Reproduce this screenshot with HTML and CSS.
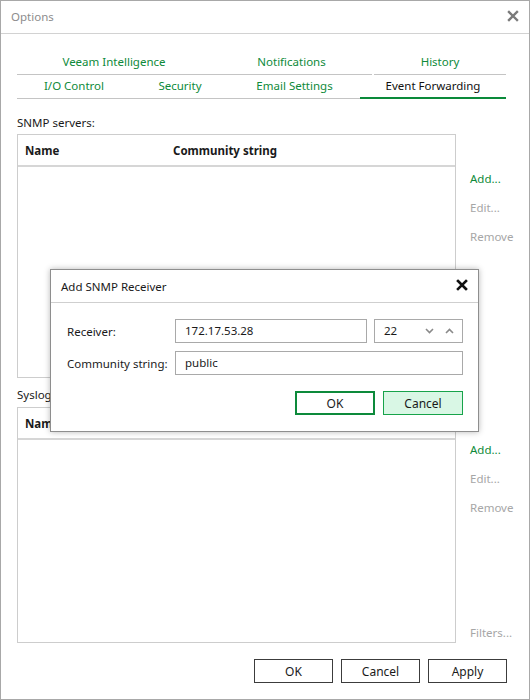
FILE: index.html
```html
<!DOCTYPE html>
<html lang="en">
<head>
  <meta charset="UTF-8" />
  <title>Options</title>
  <link rel="stylesheet" href="styles.css">
</head>
<body>

<div class="window">
  <div class="titlebar">
    <span class="title">Options</span>
    <svg class="close" width="12" height="12" viewBox="0 0 12 12">
      <path d="M2 2 L10 10 M10 2 L2 10" stroke="#7a7a7a" stroke-width="2.4" stroke-linecap="square"/>
    </svg>
  </div>

  <div class="body">
    <!-- two rows of tabs -->
    <div class="tabs">
      <div class="tab-row">
        <div class="tab w194">Veeam Intelligence</div>
        <div class="tab w161">Notifications</div>
        <div class="tab w132 gap">History</div>
      </div>
      <div class="tab-row">
        <div class="tab w114">I/O Control</div>
        <div class="tab w98">Security</div>
        <div class="tab w131">Email Settings</div>
        <div class="tab w146 active">Event Forwarding</div>
      </div>
    </div>

    <div class="section first">
      <div class="label">SNMP servers:</div>
      <div class="list-row">
        <div class="grid snmp">
          <div class="grid-head">
            <span>Name</span>
            <span>Community string</span>
          </div>
        </div>
        <div class="side">
          <a class="link">Add...</a>
          <a class="link disabled">Edit...</a>
          <a class="link disabled">Remove</a>
        </div>
      </div>
    </div>

    <div class="section">
      <div class="label">Syslog servers:</div>
      <div class="list-row">
        <div class="grid syslog">
          <div class="grid-head">
            <span>Name</span>
            <span>Port</span>
          </div>
        </div>
        <div class="side">
          <a class="link">Add...</a>
          <a class="link disabled">Edit...</a>
          <a class="link disabled">Remove</a>
          <a class="link disabled filters">Filters...</a>
        </div>
      </div>
    </div>

    <div class="footer">
      <button class="btn">OK</button>
      <button class="btn">Cancel</button>
      <button class="btn">Apply</button>
    </div>
  </div>

  <!-- modal on top of the options window -->
  <div class="dialog">
    <div class="dialog-title">
      <span>Add SNMP Receiver</span>
      <svg class="dialog-close" width="12" height="12" viewBox="0 0 12 12">
        <path d="M2 2 L10 10 M10 2 L2 10" stroke="#111" stroke-width="2.6" stroke-linecap="square"/>
      </svg>
    </div>
    <div class="dialog-body">
      <div class="form-row">
        <label>Receiver:</label>
        <div class="input host">172.17.53.28</div>
        <div class="input spin">
          <span>22</span>
          <svg class="chev" width="9" height="6" viewBox="0 0 9 6"><path d="M1 1 L4.5 4.5 L8 1" fill="none" stroke="#8a8a8a" stroke-width="1.6"/></svg>
          <svg class="chev" width="9" height="6" viewBox="0 0 9 6"><path d="M1 5 L4.5 1.5 L8 5" fill="none" stroke="#8a8a8a" stroke-width="1.6"/></svg>
        </div>
      </div>
      <div class="form-row">
        <label>Community string:</label>
        <div class="input wide">public</div>
      </div>
      <div class="dialog-buttons">
        <button class="btn primary">OK</button>
        <button class="btn soft">Cancel</button>
      </div>
    </div>
  </div>
</div>

</body>
</html>
```

FILE: styles.css
```css
body {
  margin: 0;
  font-family: 'Noto Sans', 'Segoe UI', sans-serif;
  font-size: 11.5px;
  color: #1a1a1a;
  background: #fff;
}

.window {
  position: relative;
  width: 530px;
  height: 700px;
  box-sizing: border-box;
  border: 1px solid #a8a8a8;
  background: #fff;
}

.titlebar {
  box-sizing: border-box;
  height: 33px;
  border-bottom: 1px solid #d2d2d2;
  display: flex;
  align-items: center;
  justify-content: space-between;
  padding: 0 10px 1px 10px;
}

.title {
  color: #8c8c8c;
}

.close {
  margin-top: -1px;
}

.body {
  padding: 0 22px 0 16px;
}

/* tabs */
.tabs {
  padding-top: 17px;
}

.tab-row {
  display: flex;
}

.tab {
  flex-shrink: 0;
  height: 23px;
  line-height: 22px;
  text-align: center;
  color: #0e8a3a;
  border-bottom: 1px solid #c4c4c4;
}

.tab.gap { margin-left: 2px; }
.w194 { width: 194px; }
.w161 { width: 161px; }
.w132 { width: 132px; }
.w114 { width: 114px; }
.w98  { width: 98px; }
.w131 { width: 131px; }
.w146 { width: 146px; }

.tab.active {
  color: #111;
  height: 22px;
  border-bottom: 2px solid #0a8a3a;
}

/* lists */
.section.first {
  padding-top: 14px;
}

.label {
  line-height: 19px;
  margin-bottom: 2px;
}

.section + .section .label {
  margin-top: 7px;
  margin-bottom: 3px;
}

.list-row {
  display: flex;
  gap: 14px;
}

.grid {
  flex-shrink: 0;
  width: 439px;
  box-sizing: border-box;
  border: 1px solid #cdcdcd;
}

.grid.snmp { height: 244px; }
.grid.syslog { height: 236px; }

.grid-head {
  height: 30px;
  border-bottom: 2px solid #d6d6d6;
  display: grid;
  grid-template-columns: 148px 1fr;
  align-items: center;
  padding-left: 7px;
  font-weight: bold;
}

.side {
  display: flex;
  flex-direction: column;
  padding-top: 30px;
  white-space: nowrap;
}

.section + .section .side {
  padding-top: 28px;
}

.link {
  line-height: 29px;
  color: #0e8a3a;
}

.link.disabled {
  color: #a6a6a6;
}

.link.filters {
  margin-top: auto;
  line-height: 20px;
}

.footer {
  display: flex;
  justify-content: flex-end;
  gap: 8px;
  padding-top: 16px;
}

.btn {
  width: 79px;
  height: 24px;
  box-sizing: border-box;
  border: 1px solid #3c3c3c;
  background: #fff;
  font-family: inherit;
  font-size: 12px;
  color: #1a1a1a;
  padding: 0;
}

/* dialog */
.dialog {
  position: absolute;
  left: 49px;
  top: 268px;
  width: 429px;
  height: 163px;
  box-sizing: border-box;
  border: 1px solid #8e8e8e;
  background: #fff;
  box-shadow: 0 0 6px rgba(0, 0, 0, 0.28);
}

.dialog-title {
  height: 32px;
  border-bottom: 1px solid #cfcfcf;
  display: flex;
  align-items: center;
  justify-content: space-between;
  padding: 0 10px;
}

.dialog-close {
  margin-top: -3px;
}

.dialog-body {
  padding: 16px 15px 0 16px;
}

.form-row {
  display: flex;
  align-items: center;
  margin-bottom: 8px;
}

.form-row label {
  width: 108px;
}

.input {
  height: 24px;
  box-sizing: border-box;
  border: 1px solid #a9a9a9;
  line-height: 22px;
  padding-left: 9px;
}

.input.host { width: 192px; }

.input.spin {
  width: 89px;
  margin-left: 7px;
  display: flex;
  align-items: center;
}

.input.spin span {
  flex: 1;
}

.chev {
  margin-right: 11px;
}

.chev + .chev {
  margin-right: 8px;
}

.input.wide { width: 288px; }

.dialog-buttons {
  display: flex;
  justify-content: flex-end;
  gap: 8px;
  padding-top: 8px;
}

.dialog-buttons .btn {
  width: 80px;
}

.btn.primary {
  border: 2px solid #0d8a3b;
}

.btn.soft {
  border-color: #17a34a;
  background: #d9f7e5;
}
```
